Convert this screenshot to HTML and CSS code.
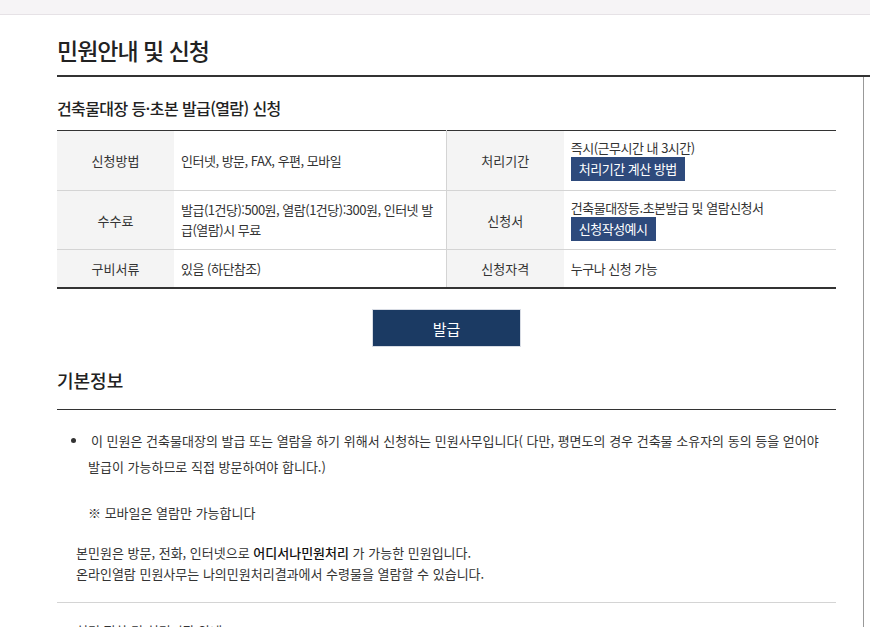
FILE: index.html
```html
<!DOCTYPE html>
<html lang="ko">
<head>
    <meta charset="UTF-8">
    <title>민원안내 및 신청</title>
    <link rel="stylesheet" href="styles.css">
</head>
<body>
    <div id="top-bar"></div>

    <div id="page">
        <h2 class="page-title">민원안내 및 신청</h2>

        <div id="content">
            <h3 class="sub-title">건축물대장 등·초본 발급(열람) 신청</h3>

            <table class="info-table">
                <tr class="row-first">
                    <th>신청방법</th>
                    <td>인터넷, 방문, FAX, 우편, 모바일</td>
                    <th>처리기간</th>
                    <td>
                        <div>즉시(근무시간 내 3시간)</div>
                        <span class="btn-small">처리기간 계산 방법</span>
                    </td>
                </tr>
                <tr class="row-second">
                    <th>수수료</th>
                    <td>발급(1건당):500원, 열람(1건당):300원, 인터넷 발급(열람)시 무료</td>
                    <th>신청서</th>
                    <td>
                        <div>건축물대장등.초본발급 및 열람신청서</div>
                        <span class="btn-small">신청작성예시</span>
                    </td>
                </tr>
                <tr class="row-short">
                    <th>구비서류</th>
                    <td>있음 (하단참조)</td>
                    <th>신청자격</th>
                    <td>누구나 신청 가능</td>
                </tr>
            </table>

            <div class="action-row">
                <button class="btn-issue">발급</button>
            </div>

            <h3 class="section-title">기본정보</h3>

            <div class="basic-info">
                <ul class="info-list">
                    <li>이 민원은 건축물대장의 발급 또는 열람을 하기 위해서 신청하는 민원사무입니다( 다만, 평면도의 경우 건축물 소유자의 동의 등을 얻어야 발급이 가능하므로 직접 방문하여야 합니다.)</li>
                </ul>
                <p class="note">※ 모바일은 열람만 가능합니다</p>
                <p class="desc">본민원은 방문, 전화, 인터넷으로 <strong>어디서나민원처리</strong> 가 가능한 민원입니다.<br>온라인열람 민원사무는 나의민원처리결과에서 수령물을 열람할 수 있습니다.</p>
            </div>

            <div class="next-section">
                <p class="next-title">처리 절차 및 처리기관 안내</p>
            </div>
        </div>
    </div>
</body>
</html>
```

FILE: styles.css
```css
html, body {
    margin: 0;
    padding: 0;
    background-color: #fff;
    color: #333;
    font-family: "Noto Sans CJK KR", "Noto Sans", sans-serif;
    font-size: 13px;
    overflow: hidden;
}
#top-bar {
    height: 14px;
    background-color: #f6f4f6;
    border-bottom: 1px solid #e6e2e6;
}
#page {
    padding-left: 57px;
}
.page-title {
    margin: 0;
    height: 60px;
    line-height: 70px;
    font-size: 23px;
    font-weight: 500;
    color: #222;
    letter-spacing: -1px;
    border-bottom: 2px solid #333;
}
#content { /* right side has a thin grey rule */
    width: 779px;
    padding-right: 27px;
    border-right: 1px solid #999;
    height: 560px;
}
.sub-title {
    margin: 0;
    height: 53px;
    line-height: 62px;
    font-size: 16px;
    font-weight: 500;
    color: #222;
    letter-spacing: -0.6px;
}
.info-table {
    width: 100%;
    border-collapse: collapse;
    border-top: 1px solid #333;
    border-bottom: 2px solid #333;
    table-layout: fixed;
}
.info-table th {
    width: 117px;
    padding: 0;
    background-color: #f4f4f4;
    font-weight: 400;
    color: #333;
    text-align: center;
    border-bottom: 1px solid #d4d4d4;
}
.info-table td {
    padding: 0 7px;
    line-height: 20px;
    word-break: break-all;
    letter-spacing: -0.5px;
    border-bottom: 1px solid #d4d4d4;
    border-right: 1px solid #d4d4d4;
}
.info-table td:last-child {
    border-right: none;
}
.row-first th, .row-first td { height: 59px; }
.row-second th, .row-second td { height: 58px; }
.row-short th, .row-short td { height: 37px; }
.info-table td div {
    margin-top: -2px;
}
.btn-small {
    display: inline-block;
    margin-top: -1px;
    padding: 0 8px;
    height: 24px;
    line-height: 24px;
    background-color: #2e4a7c;
    color: #fff;
}
.action-row {
    display: flex;
    justify-content: center;
    padding-top: 20px;
}
.btn-issue {
    width: 149px;
    height: 38px;
    background-color: #1b3a63;
    border: 1px solid #d8dce4;
    color: #fff;
    font-family: inherit;
    font-size: 15px;
    cursor: pointer;
}
.section-title {
    margin: 0;
    height: 62px;
    line-height: 67px;
    font-size: 18px;
    font-weight: 500;
    color: #222;
    border-bottom: 1px solid #333;
}
.basic-info {
    padding: 18px 10px 18px 19px;
    border-bottom: 1px solid #d4d4d4;
}
.info-list {
    margin: 0;
    padding-left: 12px;
    line-height: 26px;
}
.info-list li {
    text-indent: 3px;
}
.note {
    margin: 20px 0 0 12px;
    line-height: 26px;
}
.desc {
    margin: 16px 0 0 0;
    line-height: 21px;
}
.desc strong {
    font-weight: 500;
    color: #111;
}
.next-section {
    padding: 18px 0 0 19px;
}
.next-title {
    margin: 0;
    color: #333;
    line-height: 20px;
}
```
